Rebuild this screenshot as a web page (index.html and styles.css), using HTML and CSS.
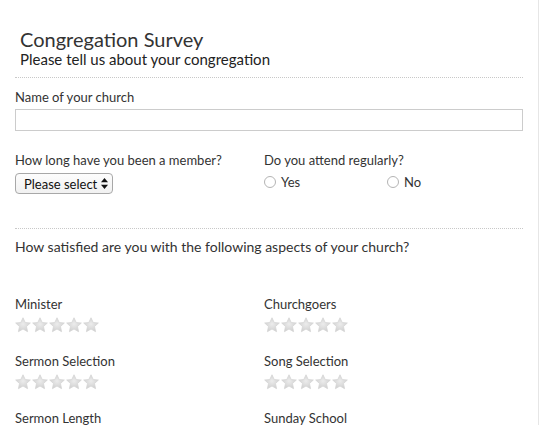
FILE: index.html
```html
<!DOCTYPE html>
<html lang="en">

<head>
    <meta charset="UTF-8">
    <meta name="viewport" content="width=device-width, initial-scale=1.0">
    <title>Congregation Survey</title>
    <link rel="stylesheet" href="styles.css">
</head>

<body>
    <div class="page">
        <div class="header">
            <h1>Congregation Survey</h1>
            <p>Please tell us about your congregation</p>
        </div>

        <div class="section">
            <label class="label">Name of your church</label>
            <input type="text" class="text-input" />
        </div>

        <div class="row">
            <div class="col">
                <label class="label">How long have you been a member?</label>
                <div class="select-wrap">
                    <select class="select">
                        <option>Please select</option>
                        <option>Less than a year</option>
                        <option>1-5 years</option>
                        <option>More than 5 years</option>
                    </select>
                    <svg class="select-arrows" width="7" height="11" viewBox="0 0 7 11">
                        <polygon points="3.5,0 7,4.2 0,4.2" fill="#111" />
                        <polygon points="0,6.8 7,6.8 3.5,11" fill="#111" />
                    </svg>
                </div>
            </div>
            <div class="col">
                <label class="label">Do you attend regularly?</label>
                <div class="radios">
                    <label class="radio"><input type="radio" name="attend" /> Yes</label>
                    <label class="radio"><input type="radio" name="attend" /> No</label>
                </div>
            </div>
        </div>

        <div class="question">
            How satisfied are you with the following aspects of your church?
        </div>

        <div class="ratings" id="ratings"></div>
    </div>

    <script>
        var items = ["Minister", "Churchgoers", "Sermon Selection", "Song Selection", "Sermon Length", "Sunday School"];
        var ratings = document.getElementById("ratings");
        var star = '<svg width="16" height="16" viewBox="0 0 16 16"><defs><radialGradient id="g" cx="0.5" cy="0.45" r="0.6"><stop offset="0" stop-color="#ececec"/><stop offset="1" stop-color="#cdcdcd"/></radialGradient></defs>' +
            '<polygon points="8,0.8 10.2,5.5 15.3,6 11.5,9.5 12.6,14.7 8,12 3.4,14.7 4.5,9.5 0.7,6 5.8,5.5" fill="url(#g)" stroke="#d6d6d6" stroke-width="0.8" stroke-linejoin="round"/></svg>';
        for (let i = 0; i < items.length; i++) {
            var cell = document.createElement("div");
            cell.className = "rating";
            cell.innerHTML = '<div class="label">' + items[i] + '</div><div class="stars">' + star.repeat(5) + '</div>';
            ratings.appendChild(cell);
        }
    </script>
</body>

</html>
```

FILE: styles.css
```css
body {
    margin: 0;
    background: #fff;
    font-family: Lato, "Open Sans", sans-serif;
    color: #333;
}

.page {
    width: 508px;
    padding: 0 15px;
    border-right: 1px solid #e6e6e6;
    min-height: 425px;
}

.header {
    padding: 27px 5px 10px 5px;
    border-bottom: 1px dotted #c8c8c8;
}

.header h1 {
    margin: 0;
    font-size: 20px;
    font-weight: normal;
    line-height: 24px;
    color: #333;
}

.header p {
    margin: 0;
    font-size: 15px;
    line-height: 16px;
    color: #222;
}

.label {
    display: block;
    font-size: 13px;
    line-height: 16px;
    color: #333;
}

.section {
    padding-top: 11px;
}

.text-input {
    display: block;
    box-sizing: border-box;
    width: 100%;
    height: 22px;
    margin: 4px 0 0 0;
    border: 1px solid #ccc;
    padding: 0 4px;
    font-family: Lato, sans-serif;
}

.row {
    display: flex;
    padding-top: 21px;
    padding-bottom: 34px;
    border-bottom: 1px dotted #c8c8c8;
}

.col {
    width: 249px;
}

.select-wrap {
    position: relative;
    width: 98px;
    height: 21px;
    margin-top: 5px;
}

.select {
    -webkit-appearance: none;
    appearance: none;
    display: block;
    height: 21px;
    width: 98px;
    margin: 0;
    border: 1px solid #a8a8a8;
    border-radius: 4px;
    background: linear-gradient(#fdfdfd, #f1f1f1);
    font-family: Lato, sans-serif;
    font-size: 13px;
    color: #111;
    padding: 0 0 0 8px;
}

.select-arrows {
    position: absolute;
    right: 5px;
    top: 5px;
    pointer-events: none;
}

.radios {
    display: flex;
    margin-top: 6px;
}

.radio {
    width: 123px;
    height: 16px;
    display: flex;
    align-items: center;
    font-size: 13px;
    color: #333;
}

.radio input {
    -webkit-appearance: none;
    appearance: none;
    width: 12px;
    height: 12px;
    margin: 0 5px 0 0;
    border: 1px solid #b4b4b4;
    border-radius: 50%;
    background: #fff;
}

.question {
    font-size: 14px;
    padding-top: 10px;
    line-height: 16px;
}

.ratings {
    display: grid;
    grid-template-columns: 249px 249px;
    row-gap: 20px;
    padding-top: 41px;
}

.stars {
    display: flex;
    gap: 1px;
    margin-top: 5px;
    height: 16px;
}
```
